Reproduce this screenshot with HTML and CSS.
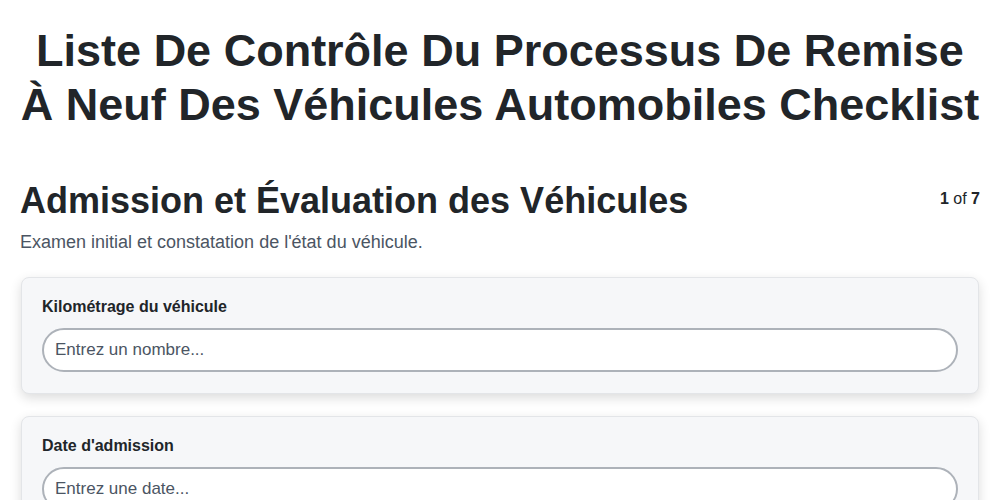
FILE: index.html
```html
<!DOCTYPE html>
<html lang="fr">
<head>
    <meta charset="UTF-8">
    <meta name="viewport" content="width=device-width, initial-scale=1.0">
    <title>Liste De Contrôle Du Processus De Remise À Neuf Des Véhicules Automobiles Checklist</title>
    <link rel="stylesheet" href="styles.css">
</head>
<body>
    <div class="container">
        <h1 class="title">Liste De Contrôle Du Processus De Remise À Neuf Des Véhicules Automobiles Checklist</h1>

        <div class="section-header">
            <h2>Admission et Évaluation des Véhicules</h2>
            <div class="step"><strong>1</strong> of <strong>7</strong></div>
        </div>
        <p class="description">Examen initial et constatation de l'état du véhicule.</p>

        <div class="card">
            <label class="field-label" for="mileage">Kilométrage du véhicule</label>
            <input class="field-input" id="mileage" type="text" placeholder="Entrez un nombre...">
        </div>

        <div class="card">
            <label class="field-label" for="intakeDate">Date d'admission</label>
            <input class="field-input" id="intakeDate" type="text" placeholder="Entrez une date...">
        </div>
    </div>
</body>
</html>
```

FILE: styles.css
```css
body {
    font-family: "Liberation Sans", Arial, sans-serif;
    margin: 0;
    padding: 0;
    color: #212529;
    background: #fff;
}

.container {
    padding: 24px 20px;
}

.title {
    margin: 0 0 47px;
    font-size: 45px;
    line-height: 1.2;
    text-align: center;
    font-weight: bold;
}

.section-header {
    display: flex;
    justify-content: space-between;
    align-items: flex-start;
}

h2 {
    margin: 0;
    font-size: 36px;
    line-height: 1.2;
}

.step {
    font-size: 16px;
    margin-top: 11px;
    color: #212529;
}

.description {
    margin: 10px 0 24px;
    font-size: 18px;
    color: #4b5563;
}

.card {
    background-color: #f6f7f9;
    border: 1px solid #e3e5e8;
    border-radius: 8px;
    box-shadow: 0 4px 12px rgba(0, 0, 0, 0.14);
    padding: 20px 20px 21px;
    margin: 0 1px 22px;
}

.field-label {
    display: block;
    font-size: 16px;
    font-weight: bold;
    margin-bottom: 12px;
}

.field-input {
    display: block;
    width: 100%;
    box-sizing: border-box;
    height: 44px;
    padding: 0 11px;
    font-family: inherit;
    font-size: 17px;
    border: 2px solid #adb2b9;
    border-radius: 22px;
    background: #fff;
    color: #212529;
}

.field-input::placeholder {
    color: #4b5563;
}
```
